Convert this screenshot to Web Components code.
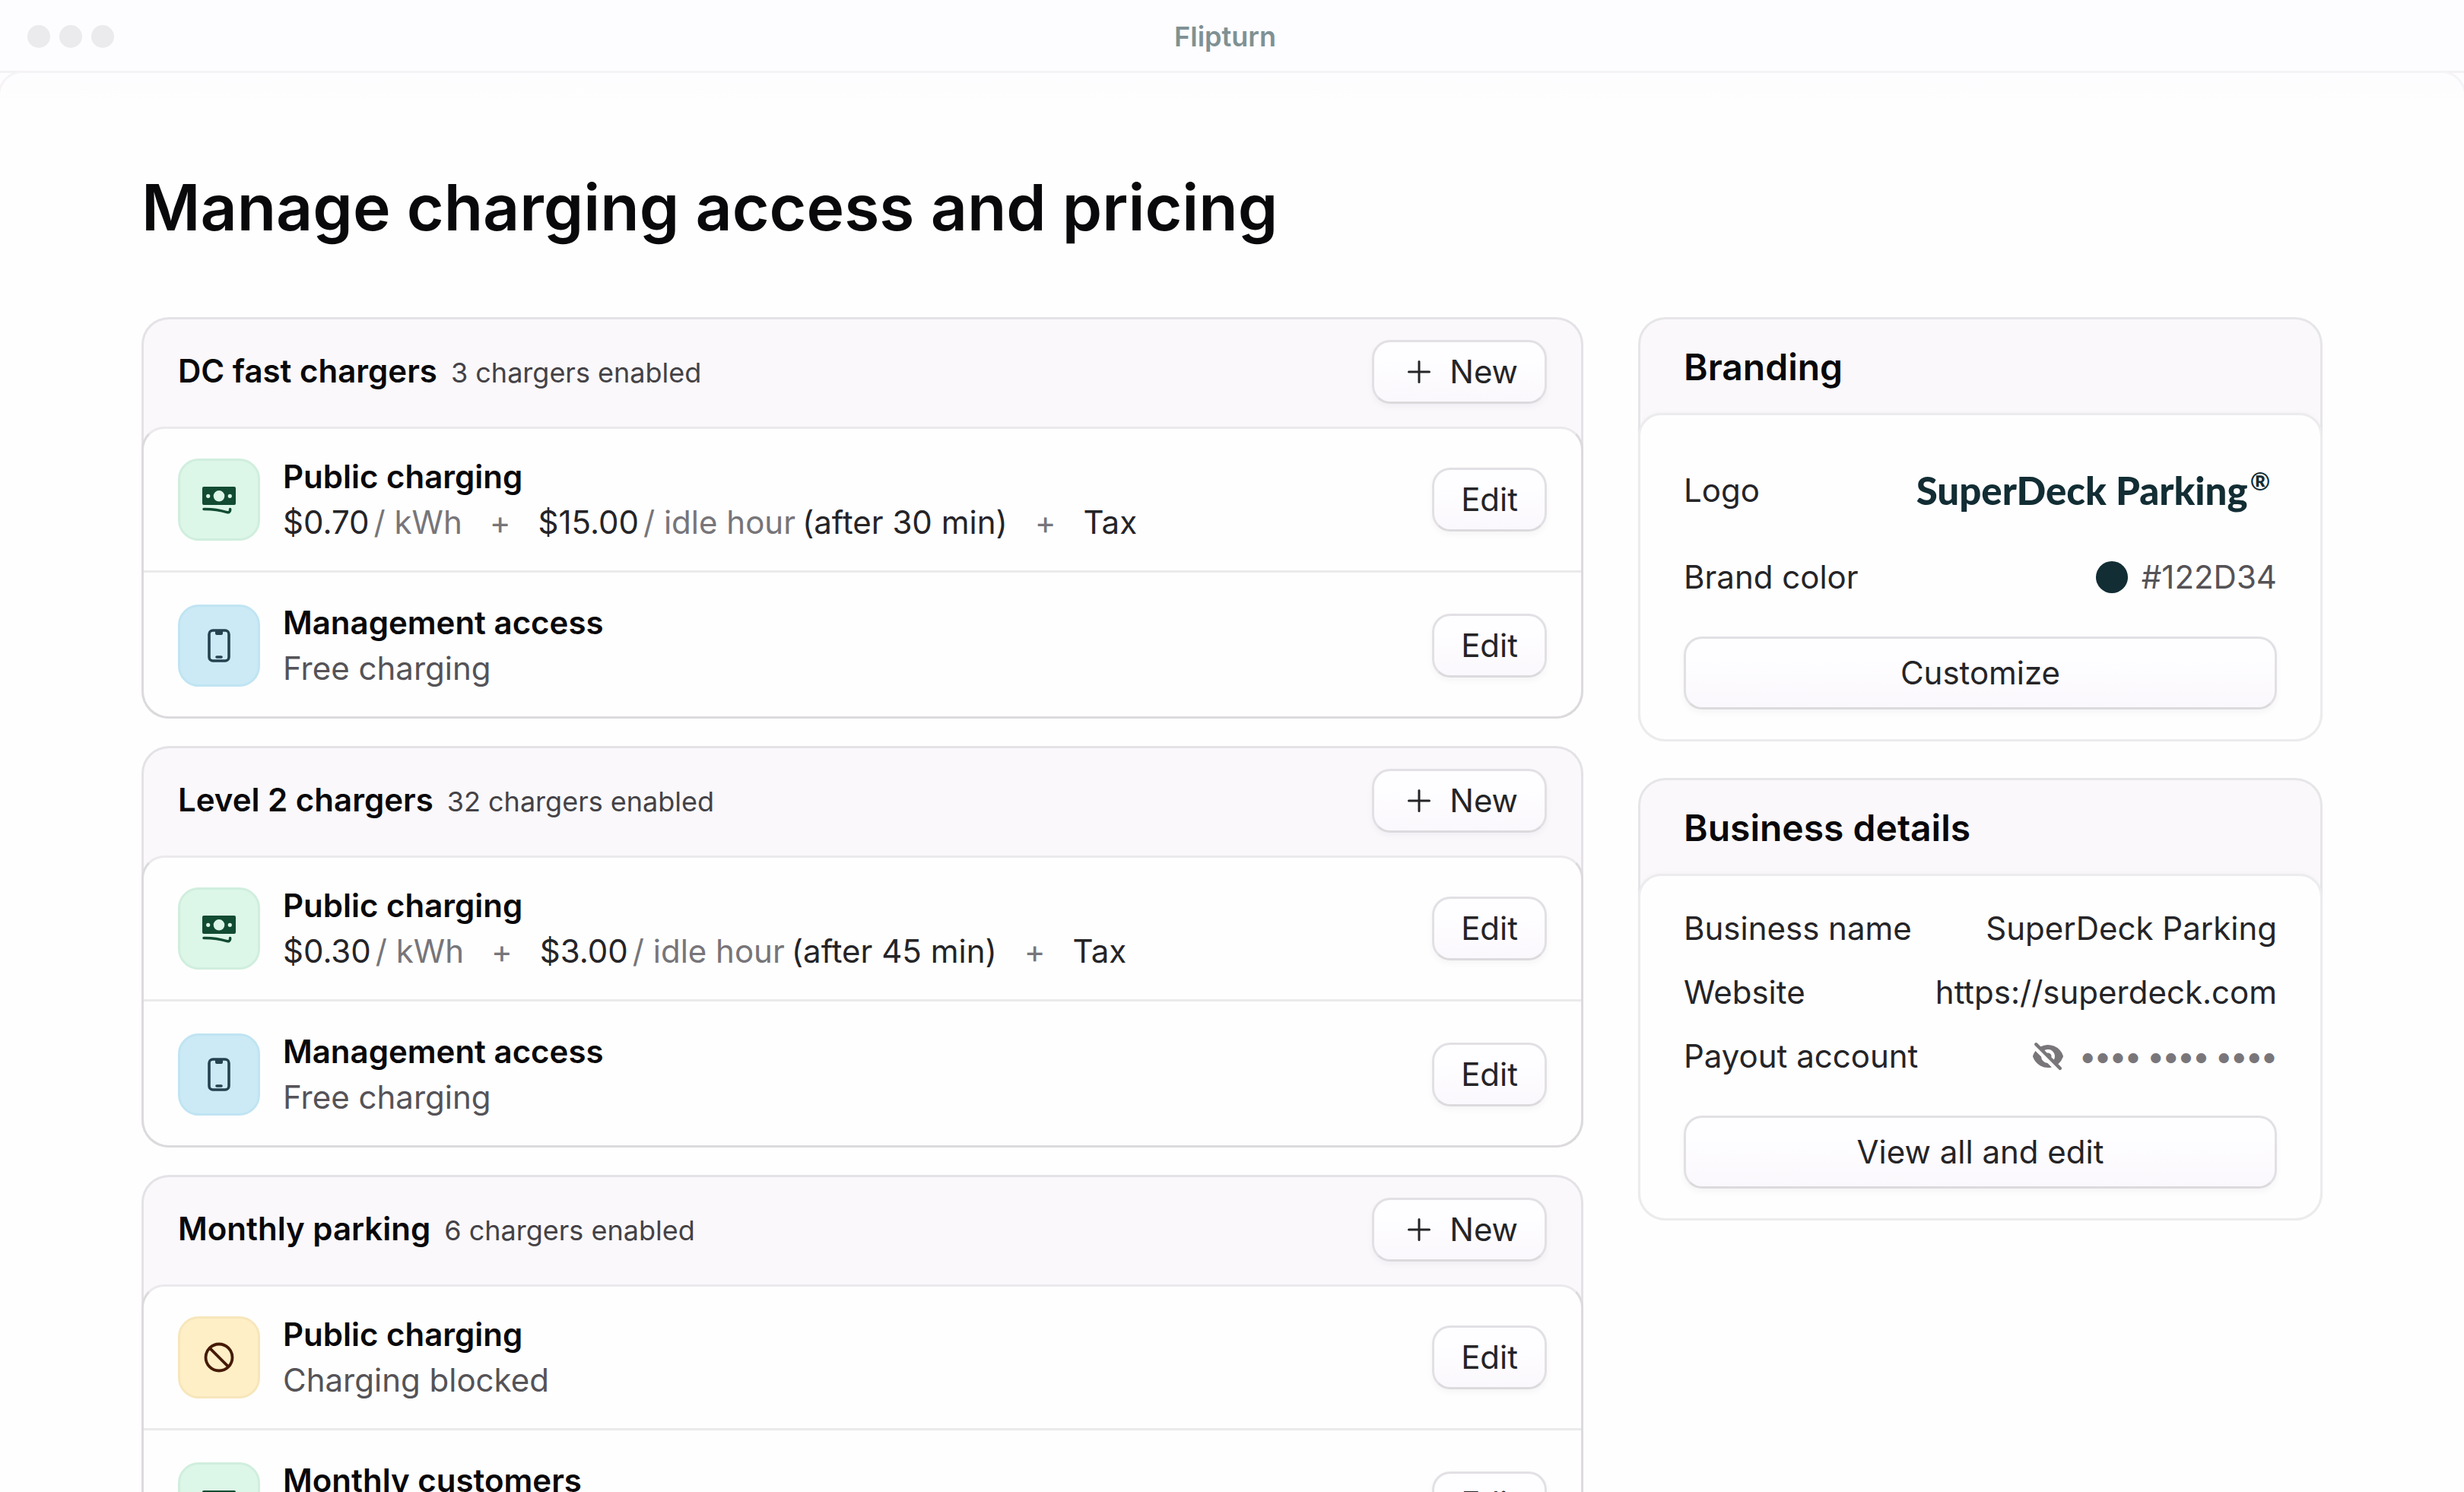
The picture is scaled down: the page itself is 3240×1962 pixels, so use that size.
<!DOCTYPE html>
<html lang="en">
<head>
	<meta charset="utf-8">
	<title>Flipturn</title>
	<style>
		body {
			margin: 0;
			font-family: Inter, 'Liberation Sans', sans-serif;
			font-size: 42px;
			line-height: 60px;
			color: #252427;
			background: #fefefe;
		}
		a {
			color: inherit;
			text-decoration: none;
		}
	</style>
</head>
<body>
	<app-window app-title="Flipturn">
		<h1 slot="heading">Manage charging access and pricing</h1>

		<charger-group heading="DC fast chargers" count="3 chargers enabled">
			<access-row icon="cash" heading="Public charging">
				<price-rate amount="$0.70" unit="/ kWh"></price-rate>
				<price-rate amount="$15.00" unit="/ idle hour" note="(after 30 min)"></price-rate>
				<price-rate amount="Tax"></price-rate>
			</access-row>
			<access-row icon="phone" heading="Management access">Free charging</access-row>
		</charger-group>

		<charger-group heading="Level 2 chargers" count="32 chargers enabled">
			<access-row icon="cash" heading="Public charging">
				<price-rate amount="$0.30" unit="/ kWh"></price-rate>
				<price-rate amount="$3.00" unit="/ idle hour" note="(after 45 min)"></price-rate>
				<price-rate amount="Tax"></price-rate>
			</access-row>
			<access-row icon="phone" heading="Management access">Free charging</access-row>
		</charger-group>

		<charger-group heading="Monthly parking" count="6 chargers enabled">
			<access-row icon="blocked" heading="Public charging">Charging blocked</access-row>
			<access-row icon="cash" heading="Monthly customers"></access-row>
		</charger-group>

		<side-card slot="aside" heading="Branding" action="Customize">
			<detail-row label="Logo" tall><brand-logo>SuperDeck Parking</brand-logo></detail-row>
			<detail-row label="Brand color"><color-value value="#122D34"></color-value></detail-row>
		</side-card>

		<side-card slot="aside" heading="Business details" action="View all and edit">
			<detail-row label="Business name">SuperDeck Parking</detail-row>
			<detail-row label="Website"><a href="https://superdeck.com">https://superdeck.com</a></detail-row>
			<detail-row label="Payout account"><masked-value>•••• •••• ••••</masked-value></detail-row>
		</side-card>
	</app-window>

	<script>
		const icons = {
			cash: `
				<svg viewBox="0 0 108 108" aria-hidden="true">
					<path fill="currentColor" fill-rule="evenodd" d="M34 37h40a2 2 0 0 1 2 2v20a2 2 0 0 1-2 2H34a2 2 0 0 1-2-2V39a2 2 0 0 1 2-2Zm20 5a7.3 7.3 0 1 0 0 14.600a7.3 7.3 0 0 0 0-14.600Zm-14.300 4.700a2.600 2.600 0 1 0 0 5.200a2.600 2.600 0 0 0 0-5.200Zm28.600 0a2.600 2.600 0 1 0 0 5.200a2.600 2.600 0 0 0 0-5.200Z"/>
					<path fill="none" stroke="currentColor" stroke-width="3.500" stroke-linecap="round" stroke-linejoin="round" d="M34 66.500c11-.2 21 1.300 30.500 4.200 2 .6 4-.6 4.100-2.500V66.500"/>
				</svg>`,
			phone: `
				<svg viewBox="0 0 108 108" aria-hidden="true">
					<rect x="41" y="34" width="26" height="40" rx="5" fill="none" stroke="currentColor" stroke-width="3.600"/>
					<path fill="currentColor" d="M49 34h10v4a2 2 0 0 1-2 2h-6a2 2 0 0 1-2-2Z"/>
					<path stroke="currentColor" stroke-width="3.600" stroke-linecap="round" d="M51 69h6"/>
				</svg>`,
			blocked: `
				<svg viewBox="0 0 108 108" aria-hidden="true">
					<circle cx="54" cy="54" r="17.500" fill="none" stroke="currentColor" stroke-width="3.800"/>
					<path stroke="currentColor" stroke-width="3.800" d="M41.600 41.600 66.400 66.400"/>
				</svg>`,
			plus: `
				<svg viewBox="0 0 48 48" aria-hidden="true">
					<path fill="none" stroke="currentColor" stroke-width="3" stroke-linecap="round" d="M24 10.500v27M10.500 24h27"/>
				</svg>`,
			eyeSlash: `
				<svg viewBox="0 0 16 16" fill="currentColor" aria-hidden="true">
					<path fill-rule="evenodd" d="M3.280 2.220a.75.75 0 0 0-1.060 1.060l10.500 10.500a.75.75 0 1 0 1.060-1.060l-1.322-1.323a7.012 7.012 0 0 0 2.160-3.110.87.87 0 0 0 0-.567A7.003 7.003 0 0 0 4.820 3.760l-1.540-1.540Zm3.196 3.195 1.135 1.136A1.502 1.502 0 0 1 9.450 8.389l1.136 1.135a3 3 0 0 0-4.109-4.109Z"/>
					<path d="m7.812 10.994 1.816 1.816A7.003 7.003 0 0 1 1.380 8.280a.87.87 0 0 1 0-.566 6.985 6.985 0 0 1 1.113-2.069l2.513 2.514a3 3 0 0 0 2.806 2.835Z"/>
				</svg>`
		};

		class AppWindow extends HTMLElement {
			constructor() {
				super();
				this.attachShadow({ mode: 'open' });
				this.shadowRoot.innerHTML = `
					<style>
						:host {
							display: flex;
							flex-direction: column;
							height: 100vh;
							overflow: hidden;
							background: #fdfcfe;
						}
						header {
							display: grid;
							grid-template-columns: 1fr auto 1fr;
							align-items: center;
							box-sizing: border-box;
							height: 96px;
							flex: none;
							padding: 3px 54px 0 36px;
							color: #7f9194;
							font-size: 36px;
							font-weight: 600;
							border-bottom: 3px solid #f3f1f4;
						}
						.dots {
							display: flex;
							gap: 12px;
						}
						.dots i {
							width: 30px;
							height: 30px;
							border-radius: 50%;
							background: #ebeaed;
						}
						main {
							flex: 1;
							min-height: 0;
							padding: 117px 186px 0;
							background: linear-gradient(#fdfcfe, #fefefe 40px);
							border-radius: 30px 30px 0 0;
							box-shadow: 0 0 0 3px #f5f3f6;
						}
						::slotted(h1) {
							margin: 0 0 84px;
							color: #09080a;
							font-size: 84px;
							font-weight: 600;
							line-height: 120px;
						}
						.columns {
							display: grid;
							grid-template-columns: minmax(0, 1fr) 900px;
							gap: 72px;
							align-items: start;
						}
						.groups {
							display: grid;
							gap: 36px;
						}
						aside {
							display: grid;
							gap: 48px;
						}
					</style>
					<header>
						<div class="dots"><i></i><i></i><i></i></div>
						<span class="title"></span>
					</header>
					<main>
						<slot name="heading"></slot>
						<div class="columns">
							<div class="groups"><slot></slot></div>
							<aside><slot name="aside"></slot></aside>
						</div>
					</main>
				`;
			}

			connectedCallback() {
				this.shadowRoot.querySelector('.title').textContent = this.getAttribute('app-title');
			}
		}

		class UiButton extends HTMLElement {
			constructor() {
				super();
				this.attachShadow({ mode: 'open' });
				this.shadowRoot.innerHTML = `
					<style>
						:host {
							display: block;
							flex: none;
						}
						button {
							display: flex;
							align-items: center;
							justify-content: center;
							gap: 16px;
							box-sizing: border-box;
							width: 100%;
							height: var(--button-height, 84px);
							padding: 0 35px;
							color: #252427;
							font: inherit;
							background: linear-gradient(#fefdff 30%, #faf8fc);
							border: 3px solid #e2e0e4;
							border-bottom-color: #dcdadd;
							border-radius: 24px;
							box-shadow: 0 4px 8px rgba(30, 20, 40, 0.04);
							cursor: pointer;
						}
						svg {
							width: 48px;
							height: 48px;
						}
					</style>
					<button type="button"><slot></slot></button>
				`;
			}

			connectedCallback() {
				if (this.hasAttribute('icon')) {
					this.shadowRoot
						.querySelector('button')
						.insertAdjacentHTML('afterbegin', icons[this.getAttribute('icon')]);
				}
			}
		}

		class ChargerGroup extends HTMLElement {
			constructor() {
				super();
				this.attachShadow({ mode: 'open' });
				this.shadowRoot.innerHTML = `
					<style>
						:host {
							display: block;
							background: #faf8fb;
							border: 3px solid #e4e2e6;
							border-bottom-color: #dadadb;
							border-radius: 36px;
						}
						header {
							display: flex;
							align-items: center;
							justify-content: space-between;
							padding: 27px 45px 30px;
						}
						.text {
							display: flex;
							align-items: baseline;
							gap: 18px;
						}
						h2 {
							margin: 0;
							color: #09080a;
							font-size: 42px;
							font-weight: 600;
						}
						.count {
							color: #444246;
							font-size: 36px;
						}
						.rows {
							margin: 0 -3px -3px;
							background: #fefefe;
							border: 3px solid #dcdadd;
							border-top-color: #ebe9ec;
							border-radius: 30px 30px 36px 36px;
						}
					</style>
					<header>
						<div class="text">
							<h2></h2>
							<span class="count"></span>
						</div>
						<ui-button icon="plus">New</ui-button>
					</header>
					<div class="rows"><slot></slot></div>
				`;
			}

			connectedCallback() {
				this.shadowRoot.querySelector('h2').textContent = this.getAttribute('heading');
				this.shadowRoot.querySelector('.count').textContent = this.getAttribute('count');
			}
		}

		class AccessRow extends HTMLElement {
			constructor() {
				super();
				this.attachShadow({ mode: 'open' });
				this.shadowRoot.innerHTML = `
					<style>
						:host {
							display: flex;
							align-items: center;
							gap: 30px;
							padding: 33px 45px;
						}
						:host(:not(:first-child)) {
							padding-top: 36px;
							border-top: 3px solid #ebeaeb;
						}
						.icon {
							display: grid;
							place-items: center;
							box-sizing: border-box;
							width: 108px;
							height: 108px;
							flex: none;
							border: 3px solid;
							border-radius: 27px;
						}
						.icon svg {
							width: 108px;
							height: 108px;
							margin: -3px;
						}
						.cash {
							color: #114b31;
							background: #dcf6e7;
							border-color: #d0eede;
						}
						.phone {
							color: #24424f;
							background: #cbeaf6;
							border-color: #c0e4f2;
						}
						.blocked {
							color: #451a03;
							background: #feefc7;
							border-color: #f7e6bb;
						}
						.text {
							flex: 1;
							min-width: 0;
						}
						h3 {
							margin: 0;
							color: #09080a;
							font-size: 42px;
							font-weight: 600;
						}
						.detail {
							display: flex;
							min-height: 60px;
							color: #555357;
						}
					</style>
					<div class="icon"></div>
					<div class="text">
						<h3></h3>
						<div class="detail"><slot></slot></div>
					</div>
					<ui-button>Edit</ui-button>
				`;
			}

			connectedCallback() {
				const icon = this.getAttribute('icon');
				const tile = this.shadowRoot.querySelector('.icon');
				tile.classList.add(icon);
				tile.innerHTML = icons[icon];
				this.shadowRoot.querySelector('h3').textContent = this.getAttribute('heading');
			}
		}

		class PriceRate extends HTMLElement {
			constructor() {
				super();
				this.attachShadow({ mode: 'open' });
				this.shadowRoot.innerHTML = `
					<style>
						:host {
							display: flex;
							gap: 6px;
							color: #252427;
						}
						:host(:not(:first-child))::before {
							content: '+';
							margin: 0 30px 0 36px;
							color: #777579;
						}
						.unit {
							color: #777579;
						}
						.note {
							margin-left: 3px;
						}
						span:empty {
							display: none;
						}
					</style>
					<span class="amount"></span>
					<span class="unit"></span>
					<span class="note"></span>
				`;
			}

			connectedCallback() {
				for (const name of ['amount', 'unit', 'note']) {
					this.shadowRoot.querySelector('.' + name).textContent = this.getAttribute(name) || '';
				}
			}
		}

		class SideCard extends HTMLElement {
			constructor() {
				super();
				this.attachShadow({ mode: 'open' });
				this.shadowRoot.innerHTML = `
					<style>
						:host {
							display: block;
							background: #faf8fb;
							border: 3px solid #e6e5e8;
							border-bottom-width: 0;
							border-radius: 36px;
						}
						h2 {
							margin: 0;
							padding: 33px 57px 30px;
							color: #09080a;
							font-size: 48px;
							font-weight: 600;
						}
						.body {
							display: grid;
							gap: 24px;
							margin: 0 -3px;
							padding: 39px 57px;
							background: #fefefe;
							border: 3px solid #ecebed;
							border-radius: 30px 30px 36px 36px;
							box-shadow: 0 -2px 4px rgba(30, 20, 40, 0.02);
						}
						ui-button {
							--button-height: 96px;
							margin-top: 24px;
						}
					</style>
					<h2></h2>
					<div class="body">
						<slot></slot>
						<ui-button></ui-button>
					</div>
				`;
			}

			connectedCallback() {
				this.shadowRoot.querySelector('h2').textContent = this.getAttribute('heading');
				this.shadowRoot.querySelector('ui-button').textContent = this.getAttribute('action');
			}
		}

		class DetailRow extends HTMLElement {
			constructor() {
				super();
				this.attachShadow({ mode: 'open' });
				this.shadowRoot.innerHTML = `
					<style>
						:host {
							display: flex;
							align-items: center;
							justify-content: space-between;
						}
						:host([tall]) {
							min-height: 120px;
						}
					</style>
					<span class="label"></span>
					<span class="value"><slot></slot></span>
				`;
			}

			connectedCallback() {
				this.shadowRoot.querySelector('.label').textContent = this.getAttribute('label');
			}
		}

		class BrandLogo extends HTMLElement {
			constructor() {
				super();
				this.attachShadow({ mode: 'open' });
				this.shadowRoot.innerHTML = `
					<style>
						:host {
							display: flex;
							align-items: flex-start;
							gap: 3px;
							padding-right: 9px;
							color: #122d34;
							font-family: Lato, 'Liberation Sans', sans-serif;
							font-size: 51px;
							font-weight: 900;
						}
						sup {
							font-size: 32px;
							font-weight: 700;
							line-height: 36px;
						}
					</style>
					<span><slot></slot></span><sup>®</sup>
				`;
			}
		}

		class ColorValue extends HTMLElement {
			constructor() {
				super();
				this.attachShadow({ mode: 'open' });
				this.shadowRoot.innerHTML = `
					<style>
						:host {
							display: flex;
							align-items: center;
							gap: 18px;
							color: #555357;
						}
						i {
							width: 42px;
							height: 42px;
							border-radius: 50%;
						}
					</style>
					<i></i><span></span>
				`;
			}

			connectedCallback() {
				const value = this.getAttribute('value');
				this.shadowRoot.querySelector('i').style.background = value;
				this.shadowRoot.querySelector('span').textContent = value;
			}
		}

		class MaskedValue extends HTMLElement {
			constructor() {
				super();
				this.attachShadow({ mode: 'open' });
				this.shadowRoot.innerHTML = `
					<style>
						:host {
							display: flex;
							align-items: center;
							gap: 18px;
							color: #79767a;
							font-weight: 700;
						}
						svg {
							width: 48px;
							height: 48px;
						}
					</style>
					${icons.eyeSlash}
					<span><slot></slot></span>
				`;
			}
		}

		customElements.define('app-window', AppWindow);
		customElements.define('ui-button', UiButton);
		customElements.define('charger-group', ChargerGroup);
		customElements.define('access-row', AccessRow);
		customElements.define('price-rate', PriceRate);
		customElements.define('side-card', SideCard);
		customElements.define('detail-row', DetailRow);
		customElements.define('brand-logo', BrandLogo);
		customElements.define('color-value', ColorValue);
		customElements.define('masked-value', MaskedValue);
	</script>
</body>
</html>
